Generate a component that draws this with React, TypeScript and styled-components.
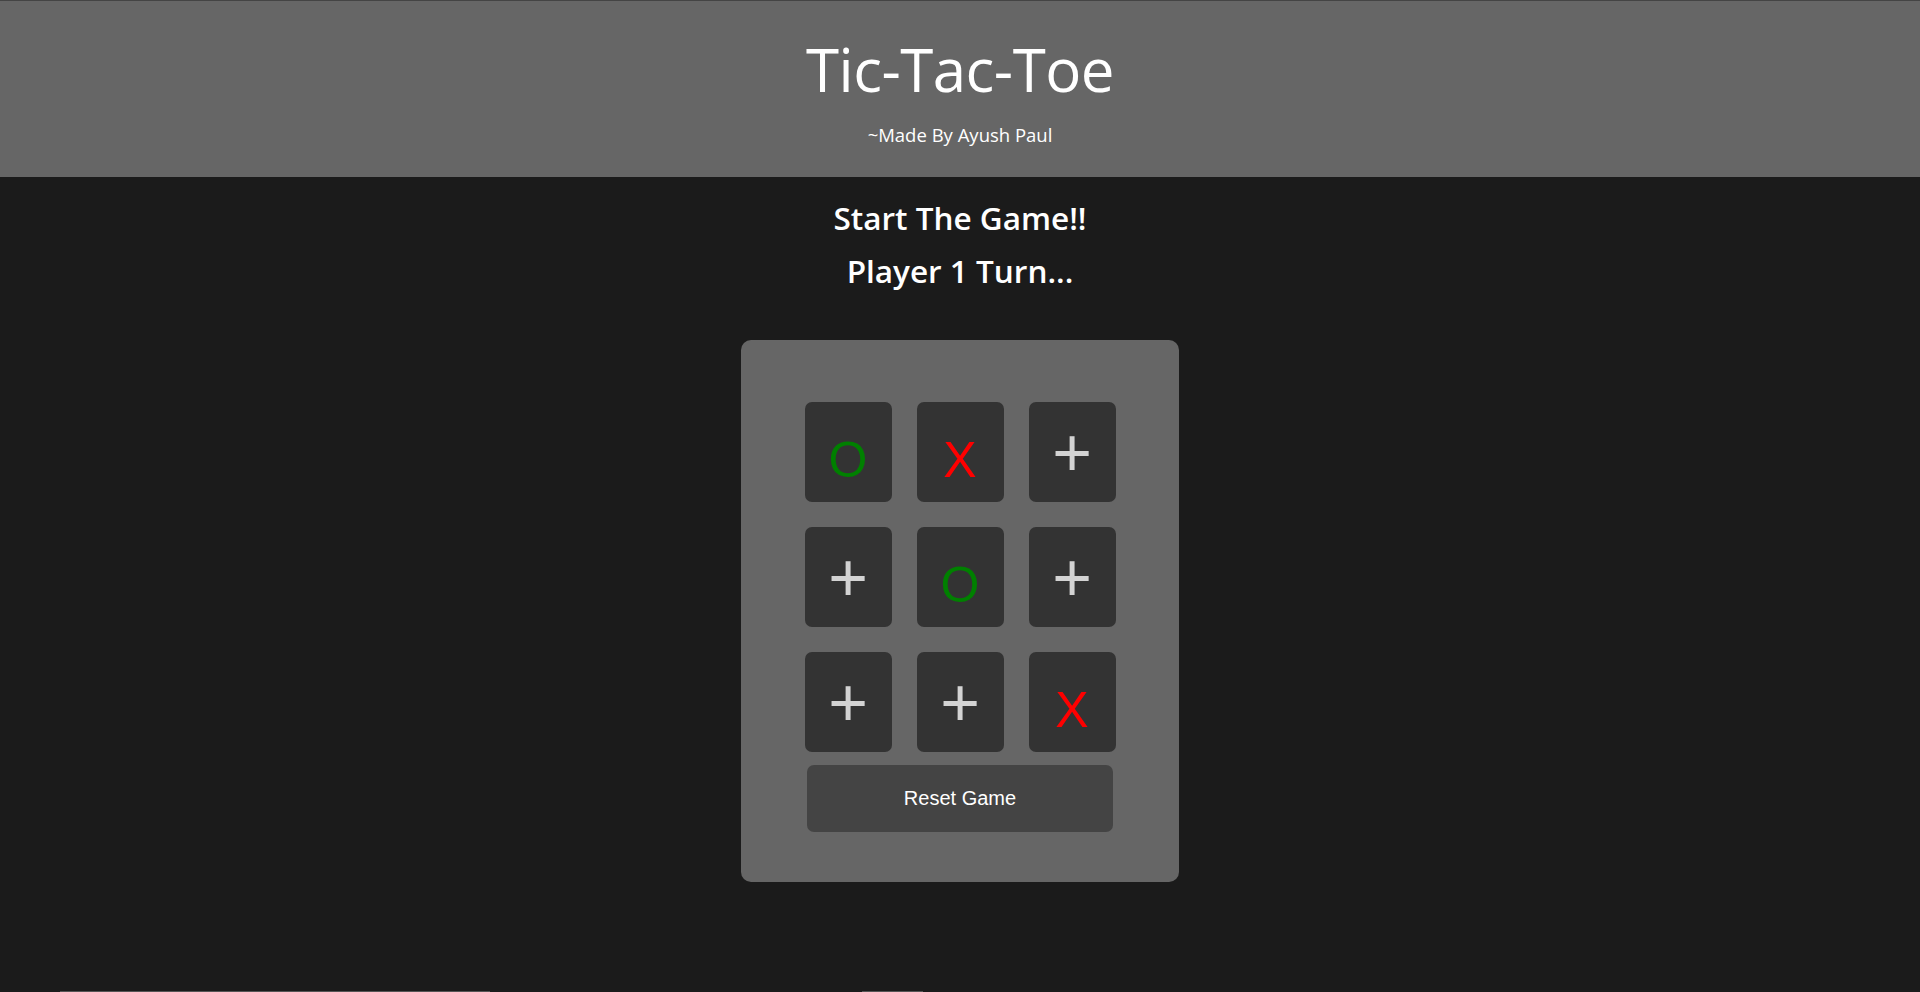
import React from "react";
import styled, { createGlobalStyle } from "styled-components";

const GlobalStyle = createGlobalStyle`
  html, body {
    margin: 0;
    padding: 0;
    background: #1b1b1b;
  }
  body {
    font-family: "Open Sans", "Noto Sans", sans-serif;
    color: #ffffff;
  }
`;

const Page = styled.div`
  min-height: 100vh;
  display: flex;
  flex-direction: column;
  align-items: stretch;
  box-sizing: border-box;
`;

const Header = styled.header`
  background: #666666;
  border-top: 1px solid #444444;
  height: 177px;
  box-sizing: border-box;
  display: flex;
  flex-direction: column;
  align-items: center;
  padding-top: 27px;
`;

const Title = styled.h1`
  margin: 0;
  font-family: "Open Sans", sans-serif;
  font-weight: 400;
  font-size: 60px;
  line-height: normal;
  letter-spacing: -0.5px;
  color: #ffffff;
`;

const Subtitle = styled.p`
  margin: 12px 0 0;
  font-family: "Open Sans", sans-serif;
  font-size: 18.5px;
  line-height: normal;
  color: #ffffff;
`;

const Status = styled.section`
  display: flex;
  flex-direction: column;
  align-items: center;
  padding-top: 14px;
`;

const StatusLine = styled.h2`
  margin: 0;
  font-family: "Open Sans", sans-serif;
  font-weight: 600;
  font-size: 31.5px;
  line-height: 53px;
  color: #ffffff;
`;

const Board = styled.main`
  align-self: center;
  margin-top: 43px;
  width: 438px;
  height: 542px;
  box-sizing: border-box;
  background: #666666;
  border-radius: 10px;
  display: flex;
  flex-direction: column;
  align-items: center;
  padding-top: 62px;
`;

const Grid = styled.div`
  display: grid;
  grid-template-columns: repeat(3, 87px);
  grid-auto-rows: 100px;
  column-gap: 25px;
  row-gap: 25px;
`;

type Mark = "O" | "X" | "+";

const markColor: Record<Mark, string> = {
  O: "#008000",
  X: "#ff0000",
  "+": "#d3d3d3",
};

const Cell = styled.button<{ $mark: Mark }>`
  all: unset;
  box-sizing: border-box;
  background: #333333;
  border-radius: 7px;
  display: flex;
  align-items: center;
  justify-content: center;
  padding-top: ${(p) => (p.$mark === "+" ? "0" : "16px")};
  font-family: "Liberation Sans", Arial, sans-serif;
  font-size: ${(p) => (p.$mark === "+" ? "68px" : "50px")};
  font-weight: 400;
  line-height: 1;
  color: ${(p) => markColor[p.$mark]};
  cursor: pointer;
`;

const ResetButton = styled.button`
  all: unset;
  box-sizing: border-box;
  margin-top: 13px;
  width: 306px;
  height: 67px;
  background: #444444;
  border-radius: 7px;
  display: flex;
  align-items: center;
  justify-content: center;
  font-family: "Liberation Sans", Arial, sans-serif;
  font-size: 20px;
  color: #ffffff;
  cursor: pointer;
`;

const Footer = styled.footer`
  margin-top: auto;
  height: 1px;
  display: flex;
  align-items: stretch;
  padding-left: 60px;
`;

const FooterBar = styled.div<{ $w: number; $gap: number }>`
  width: ${(p) => p.$w}px;
  margin-left: ${(p) => p.$gap}px;
  background: #555555;
`;

const cells: Mark[] = ["O", "X", "+", "+", "O", "+", "+", "+", "X"];

export default function App() {
  return (
    <>
      <GlobalStyle />
      <Page>
        <Header>
          <Title>Tic-Tac-Toe</Title>
          <Subtitle>~Made By Ayush Paul</Subtitle>
        </Header>
        <Status>
          <StatusLine>Start The Game!!</StatusLine>
          <StatusLine>Player 1 Turn...</StatusLine>
        </Status>
        <Board>
          <Grid>
            {cells.map((m, i) => (
              <Cell key={i} $mark={m}>
                {m}
              </Cell>
            ))}
          </Grid>
          <ResetButton>Reset Game</ResetButton>
        </Board>
        <Footer>
          <FooterBar $w={430} $gap={0} />
          <FooterBar $w={61} $gap={372} />
        </Footer>
      </Page>
    </>
  );
}
